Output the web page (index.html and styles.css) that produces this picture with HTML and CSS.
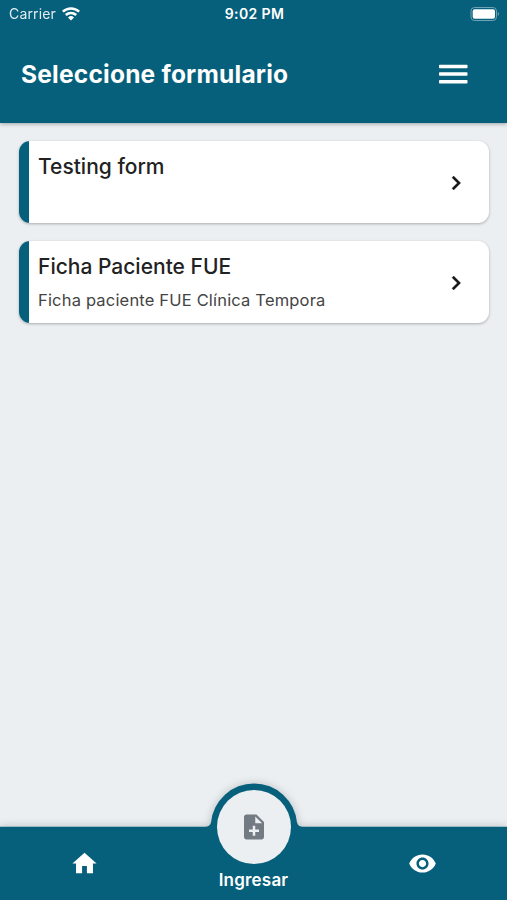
FILE: index.html
```html
<!DOCTYPE html>
<html lang="es">
<head>
<meta charset="utf-8">
<meta name="viewport" content="width=device-width, initial-scale=1">
<title>Seleccione formulario</title>
<link rel="stylesheet" href="styles.css">
</head>
<body>
<div class="app">
  <header class="header">
    <div class="status">
      <div class="carrier"><span class="carrier-name">Carrier</span>
        <svg class="wifi" viewBox="0 0 18 14" fill="none" stroke="#fff" stroke-width="2.5"><path d="M.8 4.700C5.400.3 12.600.3 17.200 4.700M3.800 8C6.800 5.200 11.200 5.200 14.200 8"/><path d="M6 10.400Q9 7.800 12 10.400L9 13.500Z" fill="#fff" stroke="none"/></svg>
      </div>
      <span class="time">9:02 PM</span>
      <svg class="battery" viewBox="0 0 30 14"><rect x="1" y=".5" width="25.500" height="13" rx="3.600" fill="none" stroke="#6fa3b6"/><rect x="2.700" y="2.200" width="22.300" height="9.600" rx="2" fill="#fff"/><path d="M27.800 4.800q2.400 2.200 0 4.400z" fill="#6fa3b6"/></svg>
    </div>
    <div class="toolbar">
      <h1 class="title">Seleccione formulario</h1>
      <svg class="menu" viewBox="0 0 29 20" fill="#fff"><rect width="28.500" height="3.500" rx=".7" y=".7"/><rect width="28.500" height="3.500" rx=".7" y="8.300"/><rect width="28.500" height="3.500" rx=".7" y="16"/></svg>
    </div>
  </header>
  <main class="list">
    <article class="card">
      <div class="card-text"><h2 class="card-title">Testing form</h2></div>
      <svg class="chevron" viewBox="0 0 24 24"><path d="M10 6 8.590 7.410 13.170 12l-4.580 4.590L10 18l6-6z"/></svg>
    </article>
    <article class="card">
      <div class="card-text"><h2 class="card-title">Ficha Paciente FUE</h2><p class="card-desc">Ficha paciente FUE Clínica Tempora</p></div>
      <svg class="chevron" viewBox="0 0 24 24"><path d="M10 6 8.590 7.410 13.170 12l-4.580 4.590L10 18l6-6z"/></svg>
    </article>
  </main>
  <nav class="tabs">
    <svg class="tabs-shape" viewBox="0 0 507 116"><path d="M0 42.700H205Q210 42.700 211 38.500A43.200 43.200 0 0 1 297 38.500Q298 42.700 303 42.700H507V116H0Z"/></svg>
    <div class="tab"><svg class="tab-icon" viewBox="0 0 24 24"><path d="M10 20v-6h4v6h5v-8h3L12 3 2 12h3v8z"/></svg></div>
    <div class="tab center">
      <div class="bubble"><svg class="note" viewBox="0 0 24 24"><path d="M14 2H6c-1.100 0-1.990.9-1.990 2L4 20c0 1.100.89 2 1.990 2H18c1.100 0 2-.9 2-2V8zm2 14h-3v3h-2v-3H8v-2h3v-3h2v3h3zm-3-7V3.500L18.500 9z"/></svg></div>
      <span class="tab-label">Ingresar</span>
    </div>
    <div class="tab"><svg class="tab-icon" viewBox="0 0 24 24"><path d="M12 4.500C7 4.500 2.730 7.610 1 12c1.730 4.390 6 7.500 11 7.500s9.270-3.110 11-7.500c-1.730-4.390-6-7.500-11-7.500zM12 17c-2.760 0-5-2.240-5-5s2.240-5 5-5 5 2.240 5 5-2.240 5-5 5zm0-8c-1.660 0-3 1.340-3 3s1.340 3 3 3 3-1.340 3-3-1.340-3-3-3z"/></svg></div>
  </nav>
</div>
</body>
</html>
```
FILE: styles.css
```css
* { box-sizing: border-box; margin: 0; }
body { background: #ebeff2; font-family: Inter, "Liberation Sans", sans-serif; }
.app { height: 900px; display: flex; flex-direction: column; overflow: hidden; }
.header { height: 123px; background: #06607b; color: #fff; box-shadow: 0 1px 4px rgba(0,0,0,.32); }
.status { height: 27px; display: grid; grid-template-columns: 1fr auto 1fr; align-items: center; padding: 0 7px 0 9px; }
.carrier { display: flex; align-items: center; gap: 6px; }
.carrier-name { font-size: 14px; line-height: 18px; letter-spacing: .15px; opacity: .88; }
.wifi { width: 18px; height: 14px; }
.time { font-size: 14px; line-height: 18px; font-weight: 600; letter-spacing: .4px; }
.battery { width: 30px; height: 14px; justify-self: end; }
.toolbar { height: 94px; display: flex; align-items: center; justify-content: space-between; padding: 0 39px 0 21px; }
.title { font-size: 24.500px; line-height: 30px; font-weight: 700; letter-spacing: .22px; white-space: nowrap; }
.menu { width: 29px; height: 20px; }
.list { flex: 1; padding: 18px 18px 0 19px; display: flex; flex-direction: column; gap: 18px; }
.card { height: 82px; background: #fff; border-radius: 11px; box-shadow: 0 1px 3px rgba(0,0,0,.28); display: flex; align-items: center; overflow: hidden; padding-right: 19px; }
.card::before { content: ""; width: 10px; align-self: stretch; background: #06607b; }
.card-text { flex: 1; align-self: stretch; padding: 12px 0 0 9px; }
.card-title { font-size: 21px; line-height: 28px; font-weight: 500; color: #222; white-space: nowrap; }
.card-desc { margin-top: 7px; font-size: 16.500px; line-height: 24px; letter-spacing: .18px; color: #444; white-space: nowrap; }
.chevron { width: 28px; height: 28px; fill: #161616; stroke: #161616; stroke-width: .3; margin-top: 1px; }
.tabs { height: 116px; position: relative; display: grid; grid-template-columns: repeat(3, 1fr); color: #fff; }
.tabs-shape { position: absolute; inset: 0; width: 100%; height: 100%; fill: #06607b; overflow: visible; filter: drop-shadow(0 0 4px rgba(0,0,0,.2)); }
.tab { position: relative; display: flex; justify-content: center; padding-top: 64.500px; }
.tab-icon { width: 29px; height: 29px; fill: #fff; }
.center { flex-direction: column; align-items: center; justify-content: flex-start; padding-top: 6px; }
.bubble { width: 74px; height: 74px; border-radius: 50%; background: #ebeff2; display: flex; align-items: center; justify-content: center; }
.note { width: 30px; height: 30px; fill: #737a82; }
.tab-label { margin-top: 5px; font-size: 17px; line-height: 22px; font-weight: 600; letter-spacing: .2px; }
```
